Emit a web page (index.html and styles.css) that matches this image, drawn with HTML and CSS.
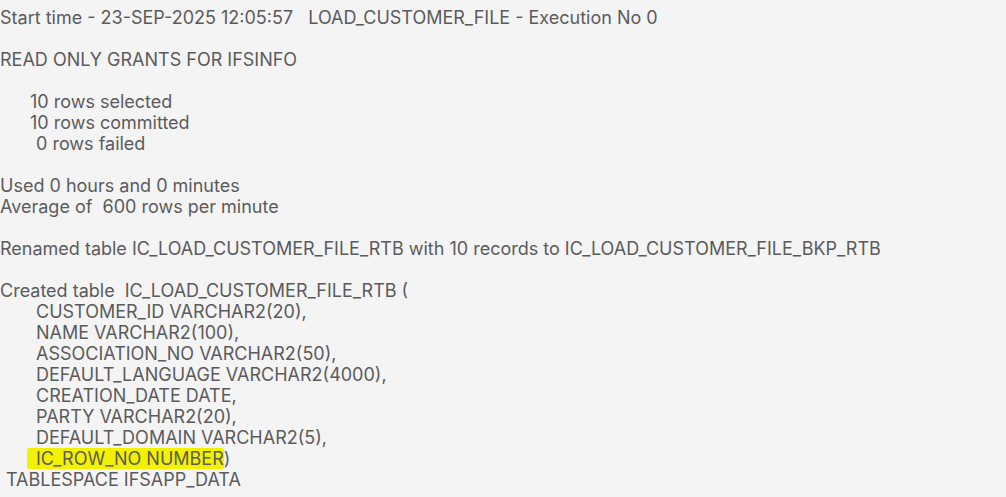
FILE: index.html
```html
<!DOCTYPE html>
<html>
<head>
<meta charset="utf-8">
<link rel="stylesheet" href="styles.css">
</head>
<body>
<div class="log">
  <div class="line">Start time - 23-SEP-2025 12:05:57&nbsp;&nbsp;&nbsp;LOAD_CUSTOMER_FILE - Execution No 0</div>
  <div class="blank"></div>
  <div class="line">READ ONLY GRANTS FOR IFSINFO</div>
  <div class="blank"></div>
  <div class="line ind1">10 rows selected</div>
  <div class="line ind1">10 rows committed</div>
  <div class="line ind2">0 rows failed</div>
  <div class="blank"></div>
  <div class="line">Used 0 hours and 0 minutes</div>
  <div class="line">Average of&nbsp; 600 rows per minute</div>
  <div class="blank"></div>
  <div class="line">Renamed table IC_LOAD_CUSTOMER_FILE_RTB with 10 records to IC_LOAD_CUSTOMER_FILE_BKP_RTB</div>
  <div class="blank"></div>
  <div class="line">Created table&nbsp; IC_LOAD_CUSTOMER_FILE_RTB (</div>
  <div class="line ind2">CUSTOMER_ID VARCHAR2(20),</div>
  <div class="line ind2">NAME VARCHAR2(100),</div>
  <div class="line ind2">ASSOCIATION_NO VARCHAR2(50),</div>
  <div class="line ind2">DEFAULT_LANGUAGE VARCHAR2(4000),</div>
  <div class="line ind2">CREATION_DATE DATE,</div>
  <div class="line ind2">PARTY VARCHAR2(20),</div>
  <div class="line ind2">DEFAULT_DOMAIN VARCHAR2(5),</div>
  <div class="line ind3"><span class="mark">IC_ROW_NO NUMBER</span>)</div>
  <div class="line ind0">TABLESPACE IFSAPP_DATA</div>
</div>
</body>
</html>
```

FILE: styles.css
```css
html, body {
  margin: 0;
  padding: 0;
  background: #f4f4f4;
}
.log {
  padding: 7px 0 0 0;
  font-family: Inter, "Noto Sans", sans-serif;
  font-size: 18px;
  line-height: 21px;
  color: #5b5b5b;
}
.line {
  height: 21px;
  white-space: nowrap;
}
.blank {
  height: 21px;
}
.ind0 { padding-left: 6px; }
.ind1 { padding-left: 30px; }
.ind2 { padding-left: 36px; }
.ind3 { padding-left: 27px; }
.mark {
  background: #f2f200;
  padding-left: 9px;
  border-radius: 2px;
  display: inline-block;
  height: 21px;
}
```
